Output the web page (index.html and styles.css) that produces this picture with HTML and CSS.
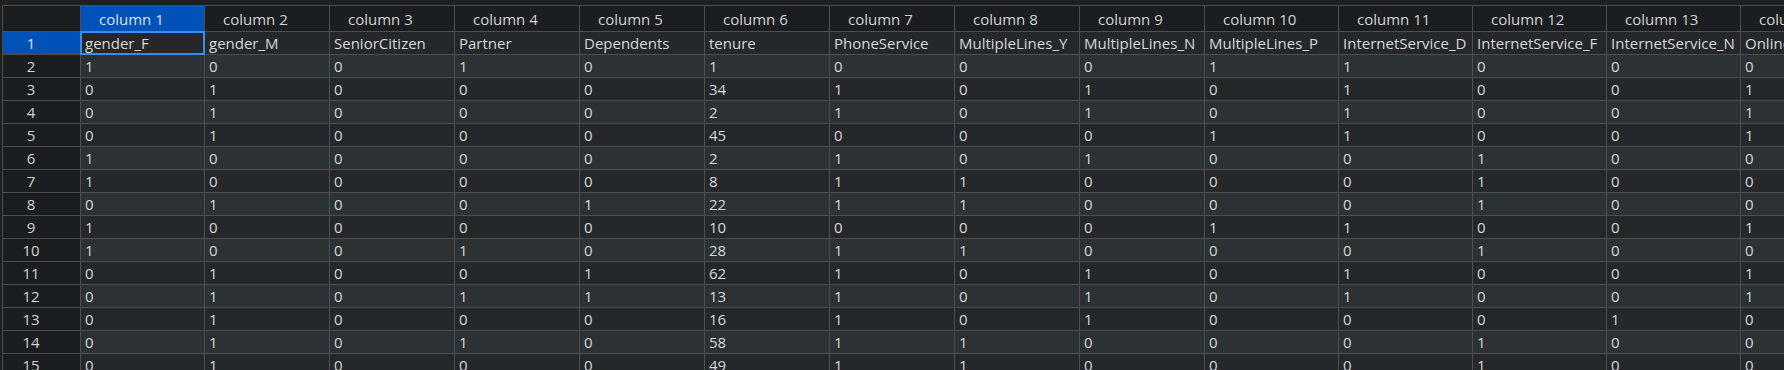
FILE: index.html
```html
<!DOCTYPE html>
<html lang="en">
<head>
<meta charset="utf-8">
<title>Data grid</title>
<link rel="stylesheet" href="styles.css">
</head>
<body>
<div class="sheet">
<table class="grid">
<thead>
<tr>
<th class="corner"></th>
<th class="colhead w124 sel">column 1</th>
<th class="colhead w125">column 2</th>
<th class="colhead w125">column 3</th>
<th class="colhead w125">column 4</th>
<th class="colhead w125">column 5</th>
<th class="colhead w125">column 6</th>
<th class="colhead w125">column 7</th>
<th class="colhead w125">column 8</th>
<th class="colhead w125">column 9</th>
<th class="colhead w134">column 10</th>
<th class="colhead w134">column 11</th>
<th class="colhead w134">column 12</th>
<th class="colhead w134">column 13</th>
<th class="colhead w134">column 14</th>
</tr>
</thead>
<tbody>
<tr><th class="rowhead sel">1</th><td class="active">gender_F</td><td>gender_M</td><td>SeniorCitizen</td><td>Partner</td><td>Dependents</td><td>tenure</td><td>PhoneService</td><td>MultipleLines_Y</td><td>MultipleLines_N</td><td>MultipleLines_P</td><td>InternetService_D</td><td>InternetService_F</td><td>InternetService_N</td><td>OnlineSecurity_Y</td></tr>
<tr><th class="rowhead">2</th><td>1</td><td>0</td><td>0</td><td>1</td><td>0</td><td>1</td><td>0</td><td>0</td><td>0</td><td>1</td><td>1</td><td>0</td><td>0</td><td>0</td></tr>
<tr><th class="rowhead">3</th><td>0</td><td>1</td><td>0</td><td>0</td><td>0</td><td>34</td><td>1</td><td>0</td><td>1</td><td>0</td><td>1</td><td>0</td><td>0</td><td>1</td></tr>
<tr><th class="rowhead">4</th><td>0</td><td>1</td><td>0</td><td>0</td><td>0</td><td>2</td><td>1</td><td>0</td><td>1</td><td>0</td><td>1</td><td>0</td><td>0</td><td>1</td></tr>
<tr><th class="rowhead">5</th><td>0</td><td>1</td><td>0</td><td>0</td><td>0</td><td>45</td><td>0</td><td>0</td><td>0</td><td>1</td><td>1</td><td>0</td><td>0</td><td>1</td></tr>
<tr><th class="rowhead">6</th><td>1</td><td>0</td><td>0</td><td>0</td><td>0</td><td>2</td><td>1</td><td>0</td><td>1</td><td>0</td><td>0</td><td>1</td><td>0</td><td>0</td></tr>
<tr><th class="rowhead">7</th><td>1</td><td>0</td><td>0</td><td>0</td><td>0</td><td>8</td><td>1</td><td>1</td><td>0</td><td>0</td><td>0</td><td>1</td><td>0</td><td>0</td></tr>
<tr><th class="rowhead">8</th><td>0</td><td>1</td><td>0</td><td>0</td><td>1</td><td>22</td><td>1</td><td>1</td><td>0</td><td>0</td><td>0</td><td>1</td><td>0</td><td>0</td></tr>
<tr><th class="rowhead">9</th><td>1</td><td>0</td><td>0</td><td>0</td><td>0</td><td>10</td><td>0</td><td>0</td><td>0</td><td>1</td><td>1</td><td>0</td><td>0</td><td>1</td></tr>
<tr><th class="rowhead">10</th><td>1</td><td>0</td><td>0</td><td>1</td><td>0</td><td>28</td><td>1</td><td>1</td><td>0</td><td>0</td><td>0</td><td>1</td><td>0</td><td>0</td></tr>
<tr><th class="rowhead">11</th><td>0</td><td>1</td><td>0</td><td>0</td><td>1</td><td>62</td><td>1</td><td>0</td><td>1</td><td>0</td><td>1</td><td>0</td><td>0</td><td>1</td></tr>
<tr><th class="rowhead">12</th><td>0</td><td>1</td><td>0</td><td>1</td><td>1</td><td>13</td><td>1</td><td>0</td><td>1</td><td>0</td><td>1</td><td>0</td><td>0</td><td>1</td></tr>
<tr><th class="rowhead">13</th><td>0</td><td>1</td><td>0</td><td>0</td><td>0</td><td>16</td><td>1</td><td>0</td><td>1</td><td>0</td><td>0</td><td>0</td><td>1</td><td>0</td></tr>
<tr><th class="rowhead">14</th><td>0</td><td>1</td><td>0</td><td>1</td><td>0</td><td>58</td><td>1</td><td>1</td><td>0</td><td>0</td><td>0</td><td>1</td><td>0</td><td>0</td></tr>
<tr><th class="rowhead">15</th><td>0</td><td>1</td><td>0</td><td>0</td><td>0</td><td>49</td><td>1</td><td>1</td><td>0</td><td>0</td><td>0</td><td>1</td><td>0</td><td>0</td></tr>
</tbody>
</table>
</div>
</body>
</html>
```

FILE: styles.css
```css
html, body {
  margin: 0;
  padding: 0;
  overflow: hidden;
  background: #1f1f1f;
}

.sheet {
  padding: 5px 0 0 2px;
}

.grid {
  table-layout: fixed;
  width: 1873px;
  border-collapse: separate;
  border-spacing: 0;
  border-left: 1px solid #4e4e4e;
  border-top: 1px solid #4e4e4e;
  font-family: "Open Sans", "Noto Sans", sans-serif;
  font-size: 15px;
  color: #d7d7d7;
}

.grid th,
.grid td {
  box-sizing: border-box;
  border-right: 1px solid #4e4e4e;
  border-bottom: 1px solid #4e4e4e;
  padding: 0;
  font-weight: 400;
  white-space: nowrap;
  overflow: hidden;
}

.grid thead th {
  height: 26px;
  background: #1b1e20;
  color: #d2d2d2;
  text-align: left;
  padding: 1px 0 0 18px;
  line-height: 24px;
  vertical-align: middle;
}

.grid .corner { width: 78px; padding: 0; }
.grid .w124 { width: 124px; }
.grid .w125 { width: 125px; }
.grid .w134 { width: 134px; }

.grid tbody td,
.grid tbody th {
  height: 23px;
  line-height: 21px;
  padding-top: 1px;
  vertical-align: middle;
}

.grid tbody td {
  padding-left: 4px;
  text-align: left;
}

.grid tbody tr:nth-child(odd) td { background: #25282b; }
.grid tbody tr:nth-child(even) td { background: #2c3134; }

.grid .rowhead {
  background: #1b1e20;
  color: #d2d2d2;
  text-align: center;
  padding-right: 21px;
}

.grid .sel,
.grid thead th.sel {
  background: #0051b8;
  color: #d8e4f5;
}

.grid td.active {
  position: relative;
  overflow: visible;
}

.grid td.active::after {
  content: "";
  position: absolute;
  top: -1px;
  left: -1px;
  right: -1px;
  bottom: -1px;
  border: 2px solid #3a8bf2;
  pointer-events: none;
}
```
